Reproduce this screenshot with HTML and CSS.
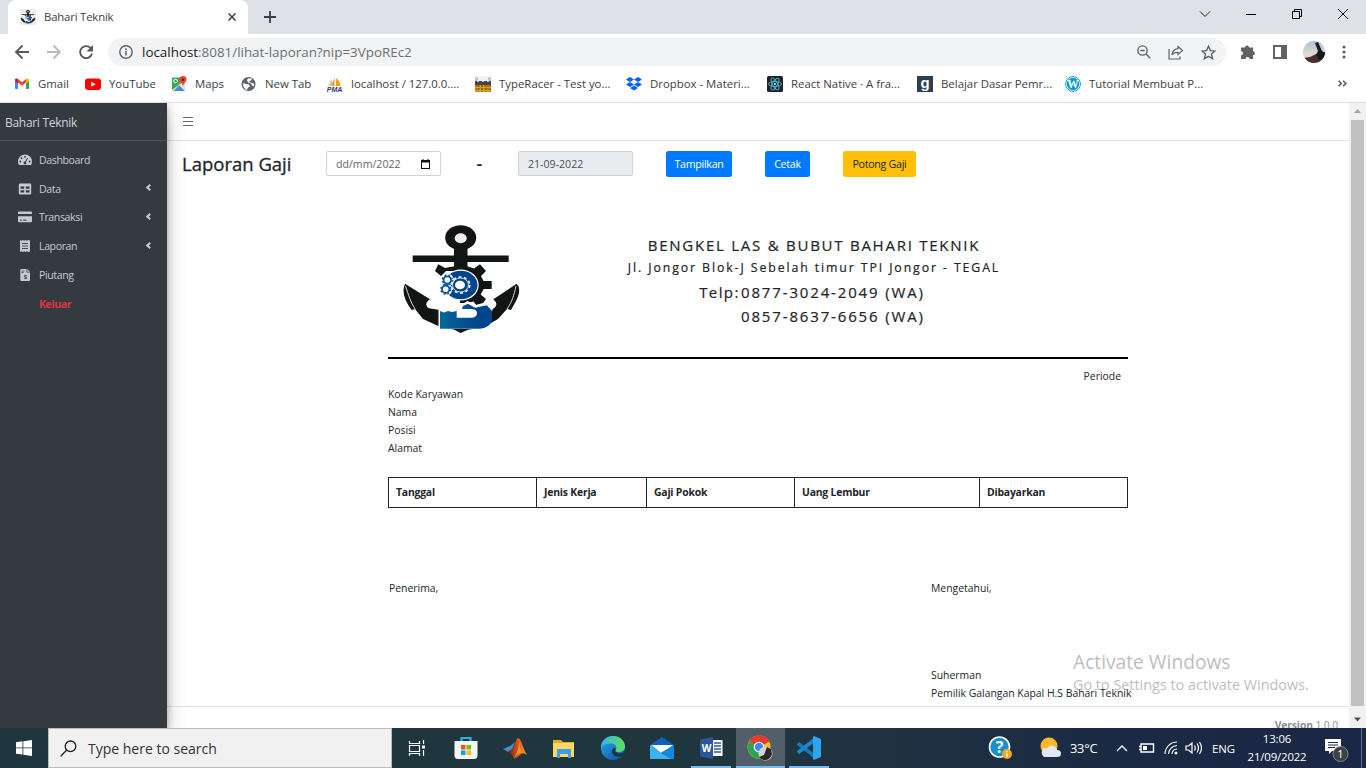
FILE: index.html
```html
<!DOCTYPE html>
<html lang="id">
<head>
<meta charset="utf-8">
<title>Bahari Teknik</title>
<link rel="stylesheet" href="styles.css">
</head>
<body>
<svg class="defs" width="0" height="0">
  <defs>
    <linearGradient id="gFist" x1="0" x2="1"><stop offset="0" stop-color="#06699a"/><stop offset=".7" stop-color="#03458c"/></linearGradient>
    <linearGradient id="gEdge" x1="0" y1="0" x2="1" y2="1"><stop offset="0" stop-color="#2aa8e8"/><stop offset="1" stop-color="#0c4da0"/></linearGradient>
    <linearGradient id="gEdge2" x1="0" x2="1"><stop offset="0" stop-color="#2fb4ef"/><stop offset="1" stop-color="#5fe05a"/></linearGradient>
    <linearGradient id="gPhoto" x1="0" y1="0" x2="0" y2="1"><stop offset="0" stop-color="#a9c3d8"/><stop offset=".6" stop-color="#e3d8d4"/></linearGradient>
    <linearGradient id="gMat" x1="0" x2="1"><stop offset="0" stop-color="#6b1d14"/><stop offset=".6" stop-color="#e8601c"/><stop offset="1" stop-color="#f9a32b"/></linearGradient>
    <symbol id="anchor" viewBox="0 0 118 110">
      <ellipse cx="58.700" cy="12.700" rx="15.500" ry="12.500" fill="#111614"/><ellipse cx="58.700" cy="13.200" rx="6" ry="5" fill="#f3eeea"/>
      <path fill="#111614" d="M52 23h13.500v25H52zM10.700 30.500h96v6.500h-96z"/>
      <path fill="#111614" d="M36.300 39.300L43 43q5-1.500 9-1.500h14l6 2 6-4.200L84 46l-5 5 2.500 5h8.200v8h-8l-3 5.500 5.300 4.500-3 4-7 2-2.500-3.500-5 1.500H58V46H44l-5 5-6-5z"/>
      <ellipse cx="58.700" cy="60" rx="18" ry="15.500" fill="#fff"/>
      <path fill="#111614" d="M3 58.700L28 74.300q-7 5-1 9L38 85v16l40 2 12-18.700q8-4.300 1.300-10l23.400-15.600Q120 64 114 76l-5 9-4-1-9 10q-9 6-18 8.700l-12 2-7.300 3.300-7-3.500L40 102.700 21 94l-8-10-3.300 1Q-2 70 3 58.700z"/>
      <path d="M3.500 61c3 9 5 16 9.500 23M114 61c-2 9-4 16-9 23" fill="none" stroke="#fff" stroke-width=".8"/>
      <ellipse cx="58.700" cy="60" rx="16.800" ry="14.300" fill="#03458c"/>
      <g fill="none" stroke="#fff"><ellipse cx="58.500" cy="60" rx="8" ry="7" stroke-width=".8"/><ellipse cx="58.500" cy="60" rx="9.300" ry="8" stroke-width="1.500" stroke-dasharray="3 2.500"/></g>
      <ellipse cx="58" cy="60" rx="5" ry="4.300" fill="#fff"/>
      <circle cx="45.300" cy="55" r="6.500" fill="#fff"/><circle cx="43.700" cy="64.300" r="6.500" fill="#fff"/>
      <g fill="#fff" stroke="#07549a" stroke-width="1.800"><circle cx="45.300" cy="55" r="3.700"/><circle cx="43.700" cy="64.300" r="3.700"/></g>
      <g fill="none" stroke="#07549a" stroke-width="1.300" stroke-dasharray="2 2"><circle cx="45.300" cy="55" r="5"/><circle cx="43.700" cy="64.300" r="5"/></g>
      <path fill="#fff" d="M36.500 84h20l4-5 5-3 9 4 11-2 5 6-3 20H36.500z"/>
      <path fill="url(#gFist)" d="M38 86l4 1.500 4-1.500 4 1 4.700-1v6.700H70q5-.7 5-4.500t-5-4.300H60l1-3 5-2.200 7 4 11.700-2.400L90 86v10q-3 7-12 7.700H38z"/>
    </symbol>
  </defs>
</svg>

<header class="tabstrip">
  <div class="tab">
    <svg class="fav" viewBox="0 0 16 16"><rect width="16" height="16" fill="#eeebe8"/><use href="#anchor" width="15" height="14" x=".5" y="1"/></svg>
    <span class="tab-title">Bahari Teknik</span>
    <svg class="tab-close" viewBox="0 0 8 8"><path d="M.5.5l7 7m0-7l-7 7" stroke="#3c4043" stroke-width="1.500"/></svg>
  </div>
  <svg class="plus" viewBox="0 0 12 12"><path d="M6 0v12M0 6h12" stroke="#3c4043" stroke-width="1.800"/></svg>
  <div class="win-controls">
    <svg width="46" height="28"><path d="M18 11.500l5 5 5-5" fill="none" stroke="#222"/></svg>
    <svg width="46" height="28"><path d="M18 14.500h10" stroke="#000"/></svg>
    <svg width="46" height="28"><path d="M18.500 11.500h7v7h-7zM20.500 11.500v-2h7v7h-2" fill="none" stroke="#000"/></svg>
    <svg width="46" height="28"><path d="M18 9l10 10m0-10l-10 10" stroke="#111"/></svg>
  </div>
</header>

<div class="toolbar">
  <svg class="nav" viewBox="0 0 16 16"><path d="M15 8H2m6.500-6.500L2 8l6.500 6.500" fill="none" stroke="#55585c" stroke-width="1.800"/></svg>
  <svg class="nav" viewBox="0 0 16 16"><path d="M1 8h13M7.500 1.500L14 8l-6.500 6.500" fill="none" stroke="#b9bbbe" stroke-width="1.800"/></svg>
  <svg class="nav" viewBox="0 0 16 16"><path d="M13.300 5A6 6 0 1 0 14 9.500" fill="none" stroke="#55585c" stroke-width="1.900"/><path d="M15 1v6.500H8.500z" fill="#55585c"/></svg>
  <div class="omnibox">
    <svg class="info" viewBox="0 0 14 14"><circle cx="7" cy="7" r="6.200" fill="none" stroke="#5f6368" stroke-width="1.400"/><path d="M7 6v4.500M7 3.300v1.600" stroke="#5f6368" stroke-width="1.500"/></svg>
    <span class="url"><b>localhost</b>:8081/lihat-laporan?nip=3VpoREc2</span>
    <div class="omni-icons">
      <svg width="14" height="14" viewBox="0 0 14 14"><g fill="none" stroke="#5f6368" stroke-width="1.400"><circle cx="5.500" cy="5.500" r="4.600"/><path d="M9 9l4.300 4.300M3.300 5.500h4.400"/></g></svg>
      <svg width="16" height="15" viewBox="0 0 16 15"><g fill="none" stroke="#5f6368" stroke-width="1.200"><path d="M1 4v10h11v-2.500"/><path d="M10 1.500l4.500 4-4.500 4V7.300C7 7.200 5.300 8 4 10c.3-3.500 2-6 6-6.400z"/></g></svg>
      <svg width="15" height="15" viewBox="0 0 15 15"><path d="M7.500 1.300l1.900 4.300 4.600.4-3.500 3.100 1.100 4.600-4.100-2.400-4.100 2.400 1.100-4.600L1 6l4.600-.4z" fill="none" stroke="#5f6368" stroke-width="1.400"/></svg>
    </div>
  </div>
  <div class="actions">
    <svg width="16" height="16" viewBox="0 0 16 16"><path fill="#5f6368" d="M1 3.500h4a2 2 0 1 1 4 0h4V7.300a2 2 0 1 1 0 4V15H9.500a2 2 0 0 0-4 0H1v-3.800a2 2 0 0 0 0-4z"/></svg>
    <svg width="14" height="14" viewBox="0 0 14 14"><path fill="#5f6368" fill-rule="evenodd" d="M0 0h14v14H0zM2 2v10h6V2z"/></svg>
    <svg width="22" height="22" viewBox="0 0 22 22"><clipPath id="av"><circle cx="11" cy="11" r="11"/></clipPath><g clip-path="url(#av)"><rect width="22" height="22" fill="url(#gPhoto)"/><path fill="#4a302c" d="M0 17l7-1 10-5 5 0v11H0z"/><path fill="#17191d" d="M12 2l3-1 4 9 3 2-1 6-5 1-3-5 2-4z"/></g></svg>
    <svg width="4" height="14" viewBox="0 0 4 14"><g fill="#5f6368"><circle cx="2" cy="2" r="1.600"/><circle cx="2" cy="7" r="1.600"/><circle cx="2" cy="12" r="1.600"/></g></svg>
  </div>
</div>

<nav class="bookmarks">
  <a><svg viewBox="0 0 16 16"><path fill="#4285f4" d="M1 3.500h3V13H2q-1 0-1-1z"/><path fill="#34a853" d="M12 3.500h3V12q0 1-1 1h-2z"/><path fill="#ea4335" d="M1 5V3.500q1-2 3-.5l4 3.300L12 3v3.500L8 9.800 4 6.500z"/><path fill="#fbbc04" d="M12 3q2-1.500 3 .5V5l-3 2.500z"/><path fill="#c5221f" d="M1 3.500L4 3v4.500L1 5z"/></svg><span>Gmail</span></a>
  <a><svg viewBox="0 0 16 16"><rect y="2.500" width="16" height="11.500" rx="3" fill="#f00"/><path d="M6.300 5.700v5l4.400-2.500z" fill="#fff"/></svg><span>YouTube</span></a>
  <a><svg viewBox="0 0 16 16"><path fill="#34a853" d="M1 1.500h10v5L1 14z"/><path fill="#4285f4" d="M2 15l6-6 6 6z"/><path fill="#dcdfe2" d="M8.500 8.500L14 7v7.500z"/><path fill="#fbbc04" d="M1 14.500l9-9 1.500 1.500-8 8z" opacity=".35"/><circle cx="4.500" cy="5" r="1.800" fill="none" stroke="#fff"/><path fill="#ea4335" d="M12 0a3.500 3.500 0 0 1 3.500 3.600C15.500 6.300 12.500 7 12 10.500 11.500 7 8.500 6.300 8.500 3.600A3.500 3.500 0 0 1 12 0z"/><circle cx="12" cy="3.700" r="1.200" fill="#811"/></svg><span>Maps</span></a>
  <a><svg viewBox="0 0 16 16"><circle cx="7.500" cy="8" r="7" fill="#5f6368"/><path d="M2 7l3 1 3 .5 1 2-2 1-1 2.500C3.500 13.500 2 11 2 7zM7 2.500h4l-1 2-2 .5 1 1.500 4 1v3l-2-1-1-2-3-1L6 4z" fill="#fff"/></svg><span>New Tab</span></a>
  <a><svg viewBox="0 0 16 16"><path fill="#f89c0e" d="M7.500 1v9H2.500Q6 7 7.500 1zM9 2q4 3 4.500 8H9z"/><path fill="#c8cad8" d="M5 3v7H1z"/><text x="-.2" y="15.700" class="pma">PMA</text></svg><span>localhost / 127.0.0....</span></a>
  <a><svg viewBox="0 0 16 16"><path fill="#c3c9d2" d="M0 1h16v8H0z"/><path fill="#eef2f8" d="M3 0h10v5H3z"/><path fill="#444" d="M0 5h2v1h2V5h3v1h2V5h3v1h2V5h2v4H0z"/><path fill="#e0a11c" d="M0 9h16v7H0z"/><path d="M0 10h16M0 13h16M3 9v7M7 9v7M11 9v7M15 9v7" stroke="#5c4310" stroke-width=".8" stroke-dasharray="2 1"/></svg><span>TypeRacer - Test yo...</span></a>
  <a><svg viewBox="0 0 16 16"><path fill="#0061ff" d="M4 1l4 2.500L4 6 0 3.500zM12 1l4 2.500L12 6 8 3.500zM4 6l4 2.500L4 11 0 8.500zM12 6l4 2.500-4 2.500-4-2.500zM8 9.500l4 2.500-4 2.500L4 12z"/></svg><span>Dropbox - Materi...</span></a>
  <a><svg viewBox="0 0 16 16"><rect width="16" height="16" rx="1.500" fill="#20232a"/><g fill="none" stroke="#4fb8cf" stroke-width=".9"><ellipse cx="8" cy="8" rx="6.500" ry="2.500"/><ellipse cx="8" cy="8" rx="6.500" ry="2.500" transform="rotate(60 8 8)"/><ellipse cx="8" cy="8" rx="6.500" ry="2.500" transform="rotate(120 8 8)"/></g><circle cx="8" cy="8" r="1.200" fill="#61dafb"/></svg><span>React Native · A fra...</span></a>
  <a><svg viewBox="0 0 16 16"><rect width="16" height="16" fill="#2d3e50"/><text x="8" y="12" class="gmark">g</text></svg><span>Belajar Dasar Pemr...</span></a>
  <a><svg viewBox="0 0 16 16"><circle cx="8" cy="8" r="7.400" fill="#fff" stroke="#0f9bd0"/><circle cx="8" cy="8" r="6.200" fill="#0f9bd0"/><text x="8" y="12.300" class="wp">W</text></svg><span>Tutorial Membuat P...</span></a>
  <svg class="more" viewBox="0 0 8 6"><path d="M.5.500L3 3 .5 5.500M4.500.500L7 3 4.500 5.500" fill="none" stroke="#55585c" stroke-width="1.400"/></svg>
</nav>

<div class="viewport">
  <aside class="sidebar">
    <div class="brand">Bahari Teknik</div>
    <ul class="menu">
      <li><svg viewBox="0 0 14 12"><path fill="#c6cad0" d="M7 .5a7 7 0 0 1 7 7q0 2-1 3.500H1Q0 9.500 0 7.500a7 7 0 0 1 7-7z"/><g fill="#343a40"><circle cx="7" cy="2.800" r=".9"/><circle cx="3.500" cy="4.200" r=".9"/><circle cx="2.300" cy="7.500" r=".9"/><circle cx="11.700" cy="7.500" r=".9"/><circle cx="7" cy="9" r="1.400"/></g><path d="M7 9l2.500-5" stroke="#343a40"/></svg><span>Dashboard</span></li>
      <li><svg viewBox="0 0 14 12"><path fill="#c6cad0" fill-rule="evenodd" d="M2 .5h10q1.200 0 1.200 1.200v8.600q0 1.200-1.200 1.200H2Q.8 11.500.8 10.300V1.700Q.8.500 2 .5zM2.500 3.500v2.200h3.700V3.500zM7.800 3.500v2.200h3.700V3.500zM2.500 7.300v2.200h3.700V7.300zM7.800 7.300v2.200h3.700V7.300z"/></svg><span>Data</span><i></i></li>
      <li><svg viewBox="0 0 14 12"><path fill="#c6cad0" d="M1 .5h12q1 0 1 1V3H0V1.500q0-1 1-1zM0 5.300h14v5q0 1-1 1H1q-1 0-1-1z"/><path d="M1.800 9.200h2M5 9.200h3.500" stroke="#343a40" stroke-width="1"/></svg><span>Transaksi</span><i></i></li>
      <li><svg viewBox="0 0 14 12"><path fill="#c6cad0" d="M2 0l1.500.8L5 0l1.300.8L7.500 0l1.400.8L10.400 0 12 .5v11l-1.600.5-1.500-.8-1.400.8-1.200-.8L5 12l-1.500-.8L2 12z"/><path d="M4 3.500h6M4 6h6M4 8.500h6" stroke="#343a40" stroke-width=".9"/></svg><span>Laporan</span><i></i></li>
      <li><svg viewBox="0 0 14 12"><path fill="#c6cad0" d="M3 0h5.500v3.500H12V11q0 1-1 1H3.300Q2.300 12 2.300 11V1Q2.300 0 3 0zM9.300 0L12 2.700H9.300z"/><path d="M3.500 2h3M3.500 3.500h2" stroke="#343a40" stroke-width=".8"/><text x="7.200" y="10" class="dollar">$</text></svg><span>Piutang</span></li>
      <li class="out"><span>Keluar</span></li>
    </ul>
  </aside>
  <main class="page">
    <div class="navbar"><svg viewBox="0 0 10 9"><path d="M0 .5h10M0 4.500h10M0 8.500h10" stroke="#666"/></svg></div>
    <section class="content">
      <div class="filters">
        <h1>Laporan Gaji</h1>
        <div class="field"><span>dd/mm/2022</span><svg viewBox="0 0 9 10"><path fill="#111" fill-rule="evenodd" d="M1.500 0h1v1h4V0h1v1H9v9H0V1h1.500zM1 3.500V9h7V3.500z"/></svg></div>
        <b class="dash">-</b>
        <div class="field disabled"><span>21-09-2022</span></div>
        <button class="btn show">Tampilkan</button>
        <button class="btn print">Cetak</button>
        <button class="btn cut">Potong Gaji</button>
      </div>
      <article class="report">
        <header class="letterhead">
          <svg class="logo"><use href="#anchor"/></svg>
          <div class="company">
            <p class="name">BENGKEL LAS &amp; BUBUT BAHARI TEKNIK</p>
            <p class="addr">Jl. Jongor Blok-J Sebelah timur TPI Jongor - TEGAL</p>
            <p class="phone"><span class="label">Telp:</span><span>0877-3024-2049 (WA)</span></p>
            <p class="phone second"><span>0857-8637-6656 (WA)</span></p>
          </div>
        </header>
        <p class="period">Periode</p>
        <div class="facts"><p>Kode Karyawan</p><p>Nama</p><p>Posisi</p><p>Alamat</p></div>
        <table class="pay"><colgroup><col class="c1"><col class="c2"><col class="c1"><col class="c4"><col class="c1"></colgroup>
          <tr><th>Tanggal</th><th>Jenis Kerja</th><th>Gaji Pokok</th><th>Uang Lembur</th><th>Dibayarkan</th></tr></table>
        <div class="signs">
          <p>Penerima,</p>
          <div><p>Mengetahui,</p><p class="signer">Suherman</p><p>Pemilik Galangan Kapal H.S Bahari Teknik</p></div>
        </div>
      </article>
    </section>
    <footer class="footer"><span><b>Version</b> 1.0.0</span></footer>
  </main>
  <div class="scroll"><svg viewBox="0 0 17 17"><path d="M5 10l3.500-4 3.500 4z" fill="#a3a3a3"/></svg><div class="thumb"></div><svg viewBox="0 0 17 17"><path d="M5 6.500l3.500 4 3.500-4z" fill="#505050"/></svg></div>
  <div class="watermark"><p class="w1">Activate Windows</p><p class="w2">Go to Settings to activate Windows.</p></div>
</div>

<footer class="taskbar">
  <div class="start"><svg width="16" height="16" viewBox="0 0 16 16"><path fill="#fff" d="M0 2.200l6.500-.9v6.200H0zM7.300 1.200L16 0v7.500H7.300zM0 8.300h6.500v6.300L0 13.700zM7.300 8.300H16V16l-8.700-1.200z"/></svg></div>
  <div class="search"><svg width="17" height="17" viewBox="0 0 17 17"><circle cx="10.500" cy="6.300" r="5.300" fill="none" stroke="#222" stroke-width="1.300"/><path d="M6.700 10L.7 16.300" stroke="#222" stroke-width="1.300"/></svg><span>Type here to search</span></div>
  <div class="apps">
    <div><svg width="18" height="17" viewBox="0 0 18 17"><g fill="none" stroke="#fff" stroke-width="1.200"><path d="M1.500 1v2.500h10V1M1.500 16v-2.500h10V16M1.500 5.500h10v6h-10zM15.500 0v4M15.500 10v6"/></g><path fill="#fff" d="M14 5.500h3v3h-3z"/></svg></div>
    <div><svg width="24" height="24" viewBox="0 0 24 24"><path d="M7.500 6V2h9v4" fill="none" stroke="#27b2e8" stroke-width="2.200"/><path d="M.5 5h23v14.500q0 3.500-3.500 3.500H4Q.5 23 .5 19.500z" fill="#f5f6f7"/><path fill="#f25022" d="M7 9h4.500v4.500H7z"/><path fill="#7fba00" d="M12.500 9H17v4.500h-4.500z"/><path fill="#00a4ef" d="M7 14.500h4.500V19H7z"/><path fill="#ffb900" d="M12.500 14.500H17V19h-4.500z"/></svg></div>
    <div><svg width="24" height="22" viewBox="0 0 24 22"><path fill="#3d8fd1" d="M0 12l7-3 5-4-3 8-4 2z"/><path fill="url(#gMat)" d="M5 15l4-3c3-3 4-11 6-11 3 0 5 11 9 17-3-2-4-2-6-1-2 2-4 4-7 5-1-4-3-6-6-7z"/><path fill="#ffb533" d="M15 1c2 6 1 12-4 20 4-3 5-6 8-5-2-4-3-12-4-15z" opacity=".6"/></svg></div>
    <div><svg width="22" height="19" viewBox="0 0 22 19"><path fill="#e9a91d" d="M0 1h8l2 2h11v15H0z"/><path fill="#ffd868" d="M0 4h21v14H0z"/><path fill="#3d9fe3" d="M4 10h14v9h-3v-4H7v4H4z"/></svg></div>
    <div><svg width="24" height="24" viewBox="0 0 24 24"><circle cx="12" cy="12" r="12" fill="url(#gEdge)"/><path fill="url(#gEdge2)" d="M0 10C1 4 6 0 12 0c7 0 12 5 12 10.500 0 4-3 5.500-6 5.500-4 0-4-1.500-3-3 1-3-1-5.500-5-5.500C5 7.500 1 9 0 13z"/><path fill="#20343f" d="M15 13c-1.500 2 0 4.500 4 4.500 2 0 4-1 5-2-.5 2-1.500 3.500-2.500 4.500-6 2-11-1-10.500-5 .3-3 3-4 4-2z"/></svg></div>
    <div><svg width="24" height="22" viewBox="0 0 24 22"><path fill="#0e62b8" d="M0 8l12-8 12 8v3H0z"/><path fill="#fff" d="M1 8h22l-11 9z"/><path fill="#1489dc" d="M24 8v14H0z"/><path fill="#38b6f4" d="M0 8l12 9 9 5H0z"/></svg></div>
    <div class="open"><svg width="23" height="22" viewBox="0 0 23 22"><path fill="#fff" d="M12 3h10.500v16H12z"/><path d="M14 6h7M14 9h7M14 12h7M14 15h7" stroke="#2b579a" stroke-width="1.300"/><path fill="#2b579a" d="M0 2.500L13 0v22L0 19.500z"/><text x="6.600" y="15" class="word">W</text></svg></div>
    <div class="open active"><svg width="26" height="26" viewBox="0 0 26 26"><circle cx="12" cy="12" r="11.500" fill="#fbc116"/><path fill="#e33b2e" d="M12 12L2 6.500a11.500 11.500 0 0 1 20.500 0z"/><path fill="#2da44e" d="M12 12L2 6.500A11.500 11.500 0 0 0 12 23.500l4-7z"/><circle cx="12" cy="12" r="5.300" fill="#fff"/><circle cx="12" cy="12" r="4.200" fill="#4285f4"/><circle cx="18.500" cy="18.500" r="7" fill="#d3d2d4"/><path fill="#30272a" d="M12 22l5-2 3-8 4 2 1 5q-2 6-7 6-4 0-6-3z"/></svg></div>
    <div class="open"><svg width="24" height="24" viewBox="0 0 24 24"><path fill="#1279bf" d="M0 8l2-2 16 12v5L0 9z"/><path fill="#1b87d0" d="M0 16l2 2L18 6V1L0 15z"/><path fill="#2fa4ee" d="M17 0l7 3v18l-7 3-1-1V1z"/></svg></div>
  </div>
  <div class="tray">
    <svg width="24" height="24" viewBox="0 0 24 24"><circle cx="11.500" cy="11" r="10" fill="#1690d0" stroke="#fff" stroke-width="1.600"/><text x="11.500" y="16.800" class="help">?</text><circle cx="19" cy="18" r="5" fill="#f7a81b"/><path d="M19 15v1.300M19 17.300V21" stroke="#fff" stroke-width="1.400"/></svg>
    <svg width="24" height="22" viewBox="0 0 24 22"><circle cx="11" cy="9" r="8.500" fill="#fdb92a"/><path fill="#dfe8f4" d="M6 20a5.500 5.500 0 0 1 0-9q2 0 3 1 2-4 6-3 4 1 4 4 4 0 4 3.500T19 20z"/></svg>
    <span class="temp">33°C</span>
    <svg width="12" height="8"><path d="M1 7l5-5 5 5" fill="none" stroke="#fff" stroke-width="1.300"/></svg>
    <svg width="16" height="10" viewBox="0 0 16 10"><path d="M2 1h12.500v8H2zM0 3.500h2v3H0" fill="none" stroke="#fff" stroke-width="1.400"/><path fill="#fff" d="M4 3h4v4H4z"/></svg>
    <svg width="14" height="14" viewBox="0 0 14 14"><g fill="none" stroke="#fff" stroke-width="1.100"><path d="M1 13A12 12 0 0 1 13 1M4.500 13A9 9 0 0 1 13 4.500M8 13a5 5 0 0 1 5-5"/></g><circle cx="12" cy="12" r="1.500" fill="#fff"/></svg>
    <svg width="18" height="14" viewBox="0 0 18 14"><g fill="none" stroke="#fff" stroke-width="1.200"><path d="M1 5h2.500L7 2v10L3.500 9H1zM9.500 4.500q1.500 2.500 0 5M12 2.500q3 4.500 0 9M14.500 1q4 6 0 12"/></g></svg>
    <span class="lang">ENG</span>
    <div class="clock"><span>13:06</span><span>21/09/2022</span></div>
    <svg class="notice" width="24" height="24" viewBox="0 0 24 24"><path fill="#fff" d="M0 1h16v12H7l-3 3v-3H0z"/><path d="M3 4.500h10M3 7h10M3 9.500h7" stroke="#1b2b43"/><circle cx="15.500" cy="16" r="7.500" fill="#3b4146" stroke="#999" stroke-width=".8"/><text x="15.500" y="20" class="badge">1</text></svg>
    <i class="peek"></i>
  </div>
</footer>
</body>
</html>
```
FILE: styles.css
```css
*{box-sizing:border-box}
body{margin:0;width:1366px;height:768px;overflow:hidden;display:flex;flex-direction:column;font-family:"Open Sans","Noto Sans",sans-serif;color:#212529;background:#fff}
p,h1,ul{margin:0;padding:0}
svg{display:block;flex:none}
.defs{position:absolute}
.tabstrip{height:34px;background:#dee1e6;display:flex;align-items:center;padding-left:8px;flex:none}
.tab{width:240px;height:34px;background:#fff;border-radius:8px 8px 0 0;display:flex;align-items:center;padding:0 12px;font-size:11.4px;color:#3c4043}
.fav{width:16px;height:16px;margin-right:8px}
.tab-title{flex:1;letter-spacing:-.2px;padding-bottom:1px}
.tab-close{width:8px;height:8px}
.plus{width:12px;height:12px;margin-left:16px}
.win-controls{margin-left:auto;display:flex;align-self:flex-start}
.toolbar{height:36px;flex:none;display:flex;align-items:center;padding:0 14px 0 14px;gap:16px}
.nav{width:16px;height:16px}
.omnibox{height:28px;width:1118px;margin-left:-2px;background:#f1f3f4;border-radius:14px;display:flex;align-items:center;padding:0 10px 0 11px}
.info{width:14px;height:14px;margin-right:9px}
.url{font-size:13.4px;color:#6c7075}
.url b{font-weight:400;color:#202124}
.omni-icons{margin-left:auto;display:flex;align-items:center;gap:17px}
.actions{display:flex;align-items:center;flex:1;justify-content:space-between;margin-left:-2px;padding-right:6px}
.bookmarks{height:33px;flex:none;border-bottom:1px solid #dadce0;display:grid;grid-template-columns:71px 86px 70px 86px 148px 151px 141px 150px 148px 273px 10px;align-items:center;padding:0 0 5px 14px;font-size:11.4px;color:#3c4043}
.bookmarks a{display:flex;align-items:center;white-space:nowrap}
.bookmarks a span{padding-bottom:1px}
.bookmarks a svg{width:16px;height:16px;margin-right:8px}
.pma{font:italic bold 7px "Liberation Sans",sans-serif;fill:#333468}
.gmark{font:bold 15px "Liberation Sans",sans-serif;fill:#fff;text-anchor:middle}
.wp{font:bold 11.500px "Liberation Serif",serif;fill:#fff;text-anchor:middle}
.dollar{font:bold 6px "Liberation Sans",sans-serif;fill:#343a40;text-anchor:middle}
.word{font:bold 10px "Open Sans",sans-serif;fill:#fff;text-anchor:middle}
.help{font:bold 16px "Open Sans",sans-serif;fill:#fff;text-anchor:middle}
.more{width:9px;height:7px}
.viewport{flex:1;min-height:0;display:flex;position:relative;overflow:hidden}
.sidebar{width:167px;background:#343a40;box-shadow:0 10px 20px rgba(0,0,0,.19),0 4px 8px rgba(0,0,0,.3);z-index:1;color:#c6cad0}
.brand{height:38px;border-bottom:1px solid #4b545c;padding:0 5px;line-height:39px;font-size:12px;color:#d0d3d6;letter-spacing:-.3px}
.menu{list-style:none;padding-top:4.600px}
.menu li{height:28.750px;display:flex;align-items:center;padding:0 15px 0 18px;font-size:10.600px;letter-spacing:-.4px}
.menu svg{width:14px;height:12px;margin-right:7px}
.menu i{width:5px;height:5px;border:solid #c6cad0;border-width:0 0 2px 2px;transform:rotate(45deg);margin-left:auto;margin-bottom:2px}
.menu .out{padding-left:39px;color:#dc3545;font-weight:700;letter-spacing:-.45px}
.page{flex:1;display:flex;flex-direction:column;min-width:0}
.navbar{height:38px;border-bottom:1px solid #dee2e6;display:flex;align-items:center;padding-left:16px;flex:none}
.navbar svg{width:10px;height:9px}
.content{height:565px;flex:none}
.filters{display:flex;align-items:flex-start;padding:10px 0 0 15px;height:60px}
.filters h1{width:144px;font-size:18.500px;font-weight:500;line-height:25px;-webkit-text-stroke:.3px #212529}
.field{width:115px;height:25px;border:1px solid #ced4da;border-radius:2px;display:flex;align-items:center;justify-content:space-between;padding:0 10px 0 9px;font-size:10.600px;color:#666}
.field svg{width:9px;height:10px}
.disabled{background:#e9ecef;color:#495057}
.dash{width:77px;text-align:center;line-height:25px;font-size:18px;font-weight:600}
.btn{height:26px;border:0;border-radius:2.500px;padding:0;font:10.700px "Open Sans",sans-serif;letter-spacing:-.3px;color:#fff;background:#007bff;margin-left:33px}
.show{width:66px}.print{width:45px}.cut{width:73px;background:#ffc107;color:#212529}
.report{width:740px;margin-left:221px;font-size:10.400px;line-height:18px}
.letterhead{height:158px;border-bottom:2px solid #000;display:flex;padding:24px 0 0 14px}
.logo{width:118px;height:110px}
.company{width:588px;text-align:center;padding-top:8px;display:flex;flex-direction:column;-webkit-text-stroke:.2px #212529}
.name{font-size:15px;letter-spacing:1.750px;line-height:24px}
.addr{font-size:12.300px;letter-spacing:1.900px;line-height:22px}
.phone{font-size:15px;letter-spacing:1.850px;line-height:24px;display:flex;padding-left:178px;margin-top:1px}
.label{width:43px;letter-spacing:1.400px}
.phone.second{padding-left:221px;margin-top:0}
.period{text-align:right;padding:8px 7px 0 0}
.facts{height:92px}
.pay{border-collapse:collapse;width:740px;table-layout:fixed}
.c1{width:148px}.c2{width:110px}.c4{width:185px}
.pay th{border:1px solid #212529;text-align:left;height:30px;padding:0 0 1px 7px;font-weight:700;letter-spacing:-.2px}
.signs{display:flex;padding:71px 0 0 1px;white-space:nowrap}
.signs>p{width:542px;flex:none}
.signer{margin-top:69px}
.footer{border-top:1px solid #dee2e6;text-align:right;padding:9px 11px 0 0;font-size:10.300px;line-height:18px;color:#869099;flex:1;letter-spacing:-.1px}
.scroll{width:17px;background:#f1f1f1;display:flex;flex-direction:column}
.scroll svg{width:17px;height:17px}
.thumb{width:13px;height:586px;background:#c1c1c1;margin:0 auto 5px 2px}
.watermark{position:absolute;left:1073px;top:546px;z-index:2;color:rgba(120,120,120,.5);white-space:nowrap}
.w1{font-size:19.200px;line-height:26px}.w2{font-size:14.400px;line-height:20px}
.taskbar{height:40px;flex:none;display:flex;background:linear-gradient(90deg,#20363f 0,#20363f 55%,#1b2945 85%,#1a2645);color:#fff}
.start{width:48px;display:grid;place-items:center}
.search{width:344px;background:#f1f1f1;border:1px solid #bbb;display:flex;align-items:center;gap:11px;padding-left:11px;font-size:14px;color:#333}
.apps{display:flex;width:596px}
.apps div{width:49.100px;display:grid;place-items:center}
.open{background:linear-gradient(#76b9ed,#76b9ed) center bottom/40px 2px no-repeat}
.apps .active{background:linear-gradient(#76b9ed,#76b9ed) center bottom/100% 2px no-repeat #515f68}
.tray{display:grid;grid-template-columns:50px 32px 46px 23px 25px 21px 27px 32px 68px 49px 5px;align-items:center;white-space:nowrap}
.temp{font-size:12.800px;letter-spacing:-.2px}
.lang{font-size:11.400px;letter-spacing:-.1px}
.clock{display:flex;flex-direction:column;text-align:center;font-size:11.400px;line-height:18px;letter-spacing:-.15px;padding-right:2px}
.notice{margin-left:13px;margin-top:3px}
.badge{font:11px "Open Sans",sans-serif;fill:#fff;text-anchor:middle}
.peek{height:40px;border-left:1px solid #68707f}
```
